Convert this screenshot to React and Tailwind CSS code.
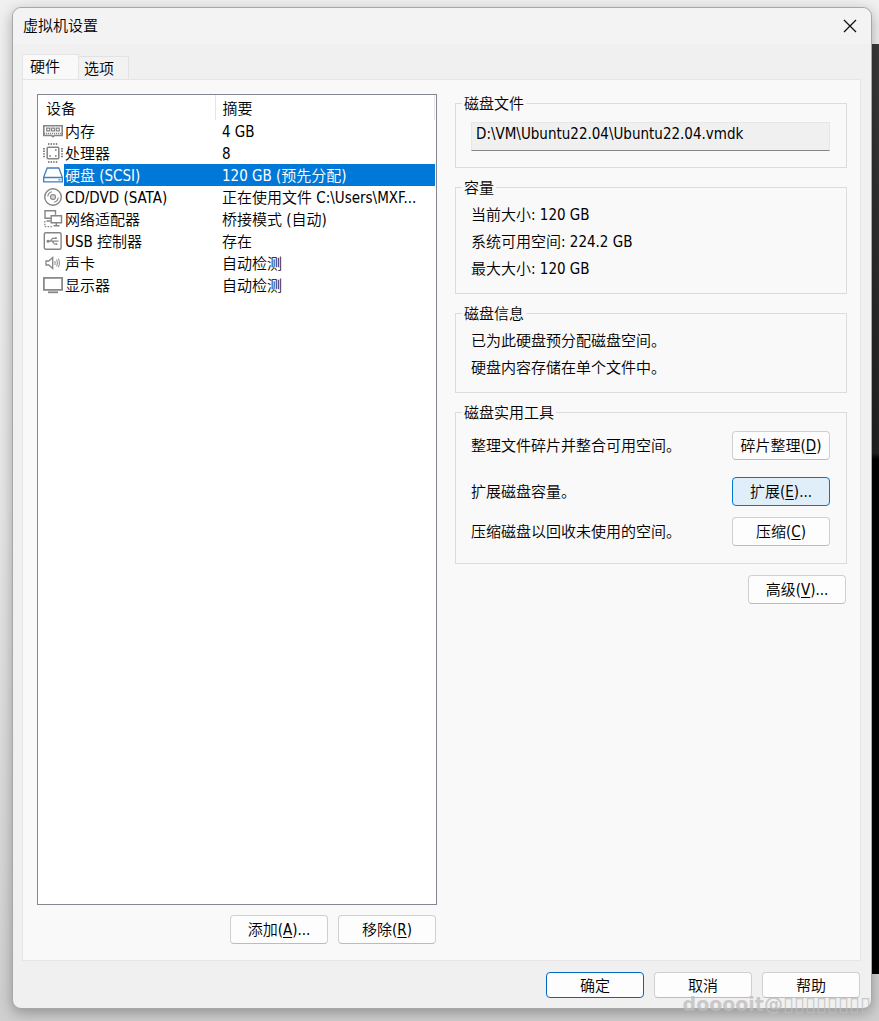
import React from "react";

const icon = { width: 20, height: 20, viewBox: "0 0 20 20", fill: "none", stroke: "#858585", "aria-hidden": true };

const MemoryIcon = () => (
  <svg {...icon}>
    <path d="M.8 4.8h18.4v9.7H11.5l-1.5 1.2-1.5-1.2H.8z" strokeWidth="1.6" />
    <path d="M1 12.5h18" strokeDasharray="1.2 .8" strokeWidth="1.4" />
    <path d="M3.7 7.2h3v2.6h-3zM8.5 7.2h3v2.6h-3zM13.3 7.2h3v2.6h-3z" strokeWidth="1.2" />
  </svg>
);
const CpuIcon = () => (
  <svg {...icon}>
    <rect x="4.2" y="4.2" width="11.6" height="11.6" rx="1" strokeWidth="1.5" />
    <path d="M5 1h10.5M5 19h10.5" strokeDasharray="1.4 1.2" strokeWidth="2" />
    <path d="M1 5v10.5M19 5v10.5" strokeDasharray="1.4 1.2" strokeWidth="2" />
    <circle cx="12.8" cy="7" r=".9" fill="#858585" stroke="none" />
    <circle cx="7" cy="13" r=".9" fill="#858585" stroke="none" />
    <circle cx="12.8" cy="13" r=".9" fill="#858585" stroke="none" />
  </svg>
);
const DiskIcon = () => (
  <svg {...icon} stroke="#3f7fc0">
    <path d="M4.2 3h11.6L19.3 12v4.8H.7V12zM.7 12.5h18.6" fill="#fff" strokeWidth="1.3" />
    <path d="M15.5 14.8h2" strokeWidth="1.2" />
  </svg>
);
const DiscIcon = () => (
  <svg {...icon}>
    <circle cx="10" cy="10" r="8.3" strokeWidth="1.4" />
    <circle cx="10" cy="10" r="2.4" strokeWidth="1.3" />
    <circle cx="10" cy="10" r=".7" fill="#858585" stroke="none" />
    <path d="M4.8 9.5A5.3 5.3 0 0 1 9 4.8M15.2 10.5A5.3 5.3 0 0 1 11 15.2" strokeWidth="1.1" />
  </svg>
);
const NetworkIcon = () => (
  <svg {...icon}>
    <path d="M8 9.3H2V1.8h10.5v4M3.5 12h4" strokeWidth="1.4" />
    <path d="M8.2 6.8h10.3v7H8.2zM13.3 14v2.3M10.5 16.8h6" strokeWidth="1.4" />
    <path d="M1.8 12v5.6h7.5" strokeDasharray="1.5 1.3" strokeWidth="1.3" />
  </svg>
);
const UsbIcon = () => (
  <svg {...icon}>
    <rect x="1.3" y="1.7" width="16.8" height="16.6" rx="1.5" strokeWidth="1.4" />
    <path d="M5 10.2h10.5M7.5 10l2-2.7H12M9.5 10.4l1.8 2.6h1.5" strokeWidth="1.2" />
    <circle cx="5" cy="10.2" r="1.5" fill="#858585" stroke="none" />
    <path d="M12 6.3h1.8v1.8H12zM12.5 12.2h1.8V14h-1.8z" fill="#858585" stroke="none" />
  </svg>
);
const SoundIcon = () => (
  <svg {...icon}>
    <path d="M3 8h2.8l3.9-3.6v11.2L5.8 12H3z" strokeWidth="1.3" />
    <path d="M12 8v4M13.6 6.6c1 2 1 4.8 0 6.8M15.4 5.6c1.3 2.8 1.3 6 0 8.8" strokeWidth="1" />
  </svg>
);
const DisplayIcon = () => (
  <svg {...icon}>
    <rect x=".9" y="2.9" width="18.2" height="12" strokeWidth="1.7" />
    <path d="M5 17.3h10" strokeWidth="1.8" />
  </svg>
);

const devices = [
  { Icon: MemoryIcon, name: "内存", summary: "4 GB" },
  { Icon: CpuIcon, name: "处理器", summary: "8" },
  { Icon: DiskIcon, name: "硬盘 (SCSI)", summary: "120 GB (预先分配)", selected: true },
  { Icon: DiscIcon, name: "CD/DVD (SATA)", summary: "正在使用文件 C:\\Users\\MXF..." },
  { Icon: NetworkIcon, name: "网络适配器", summary: "桥接模式 (自动)" },
  { Icon: UsbIcon, name: "USB 控制器", summary: "存在" },
  { Icon: SoundIcon, name: "声卡", summary: "自动检测" },
  { Icon: DisplayIcon, name: "显示器", summary: "自动检测" },
];

function Button({ label, mnemonic, tail = "", tone = "plain", short = false }) {
  const tones = {
    plain: "border-[#d0d0d0] border-b-[#bcbcbc] bg-[#fdfdfd]",
    primary: "border-[#0067c0] bg-[#fdfdfd]",
    hover: "border-[#0078d4] bg-[#e0eef9]",
  };
  return (
    <button
      type="button"
      className={`flex w-[98px] shrink-0 items-center justify-center rounded-[4px] border pt-px whitespace-nowrap ${short ? "h-[26px]" : "h-[29px]"} ${tones[tone]}`}
    >
      <span>
        {label}
        {mnemonic && (
          <>
            (<span className="underline underline-offset-2">{mnemonic}</span>)
          </>
        )}
        {tail}
      </span>
    </button>
  );
}

function Group({ title, className, children }) {
  return (
    <fieldset className="min-w-0 border border-[#dcdcdc] px-[6px]">
      <legend className="h-5 px-[2px] leading-[22px]">{title}</legend>
      <div className={`pr-[10px] pl-[9px] ${className}`}>{children}</div>
    </fieldset>
  );
}

export default function App() {
  return (
    <div className="relative isolate flex min-h-screen flex-col overflow-hidden bg-linear-to-b from-[#f0f0f0] via-[#e6e6e6] to-[#cfcfcf] pt-[7px] pr-[7px] pb-[12px] pl-[12px] font-['DejaVu_Sans_Condensed','Noto_Sans_CJK_SC',sans-serif] text-[15px] leading-[22px] font-[350] text-black">
      <div className="absolute top-[44px] right-0 bottom-[47px] -z-10 w-10 bg-linear-to-b from-[#3a3a3a] from-0% via-[#222222] via-44% to-black to-45%" />

      <section className="flex flex-1 flex-col rounded-[9px] border border-[#a8a8a8] bg-[#f0f0f0] pb-[10px] shadow-[0_4px_14px_rgba(0,0,0,0.3)]">
        <header className="flex h-9 items-center justify-between rounded-t-[9px] bg-[#f3f3f3] pr-[13px] pl-[10px]">
          <h1>虚拟机设置</h1>
          <button type="button" aria-label="关闭" className="flex size-4 items-center justify-center">
            <svg width="14" height="14" viewBox="0 0 14 14" stroke="#111" strokeWidth="1.3" aria-hidden="true">
              <path d="M1 1l12 12M13 1L1 13" />
            </svg>
          </button>
        </header>

        <div role="tablist" className="mt-[11px] ml-[9px] flex h-6 items-end">
          <button type="button" role="tab" aria-selected="true" className="-mb-px flex h-[26px] w-[57px] justify-start border border-b-0 border-[#e5e5e5] bg-[#f9f9f9] pt-px pl-[7px]">
            硬件
          </button>
          <button type="button" role="tab" aria-selected="false" className="flex h-[23px] w-[50px] justify-start border border-b-0 border-l-0 border-[#e2e2e2] bg-[#f2f2f2] pt-px pl-[5px]">
            选项
          </button>
        </div>

        <main className="mr-[10px] ml-[9px] flex flex-1 gap-[18px] border border-[#e5e5e5] bg-[#f9f9f9] pt-[14px] pr-[13px] pb-4 pl-[14px]">
          <div className="flex min-w-0 flex-[400] flex-col gap-[10px]">
            <div className="flex-1 border border-[#828790] bg-white pr-px pl-[5px]">
              <table className="w-full table-fixed border-collapse text-left">
                <colgroup>
                  <col className="w-[172px]" />
                  <col />
                </colgroup>
                <thead>
                  <tr className="h-[25px]">
                    <th className="border-r border-[#e5e5e5] p-0 pt-[2px] pl-[3px] font-[350]">设备</th>
                    <th className="border-r border-[#e5e5e5] p-0 pt-[2px] pl-[7px] font-[350]">摘要</th>
                  </tr>
                </thead>
                <tbody className="leading-5">
                  {devices.map(({ Icon, name, summary, selected }) => (
                    <tr key={name} className="h-[22px]">
                      <td className="p-0">
                        <div className="flex h-[22px] items-center whitespace-nowrap">
                          <span className="flex w-[21px] shrink-0">
                            <Icon />
                          </span>
                          <span className={`h-[22px] flex-1 pt-[2px] pl-px ${selected ? "bg-[#0078d7] text-white" : ""}`}>{name}</span>
                        </div>
                      </td>
                      <td className={`overflow-hidden p-0 pt-[2px] pl-[7px] whitespace-nowrap ${selected ? "bg-[#0078d7] text-white" : ""}`}>
                        {summary}
                      </td>
                    </tr>
                  ))}
                </tbody>
              </table>
            </div>
            <div className="flex justify-end gap-[10px] pr-px">
              <Button label="添加" mnemonic="A" tail="..." />
              <Button label="移除" mnemonic="R" />
            </div>
          </div>

          <div className="-mt-px flex min-w-0 flex-[392] flex-col gap-[9px]">
            <Group title="磁盘文件" className="pt-[9px] pb-4">
              <input
                aria-label="磁盘文件"
                readOnly
                value="D:\VM\Ubuntu22.04\Ubuntu22.04.vmdk"
                className="block h-[29px] w-full border border-[#e6e6e6] border-b-[#868686] bg-[#f0f0f0] px-1 pb-[6px] outline-none"
              />
            </Group>
            <Group title="容量" className="pt-[5px] pb-[10px] leading-[27px]">
              <p>当前大小: 120 GB</p>
              <p>系统可用空间: 224.2 GB</p>
              <p>最大大小: 120 GB</p>
            </Group>
            <Group title="磁盘信息" className="pt-[5px] pb-[10px] leading-[27px]">
              <p>已为此硬盘预分配磁盘空间。</p>
              <p>硬盘内容存储在单个文件中。</p>
            </Group>
            <Group title="磁盘实用工具" className="pt-[9px] pb-[17px]">
              <div className="flex items-center justify-between">
                <p>整理文件碎片并整合可用空间。</p>
                <Button label="碎片整理" mnemonic="D" />
              </div>
              <div className="mt-[17px] flex items-center justify-between">
                <p>扩展磁盘容量。</p>
                <Button label="扩展" mnemonic="E" tail="..." tone="hover" />
              </div>
              <div className="mt-[11px] flex items-center justify-between">
                <p>压缩磁盘以回收未使用的空间。</p>
                <Button label="压缩" mnemonic="C" />
              </div>
            </Group>
            <div className="mt-[2px] flex justify-end pr-px">
              <Button label="高级" mnemonic="V" tail="..." />
            </div>
          </div>
        </main>

        <footer className="mt-[11px] mr-[11px] flex justify-end gap-[10px]">
          <Button label="确定" tone="primary" short />
          <Button label="取消" short />
          <Button label="帮助" short />
        </footer>
      </section>

      <div className="pointer-events-none absolute right-[8px] bottom-[6px] flex items-center font-['DejaVu_Sans',sans-serif] whitespace-nowrap text-[#bdbdbd]/80">
        <span className="text-[19px] font-bold">dooooit@</span>
        <span className="text-[20px] font-normal">▯▯▯▯▯▯▯▯</span>
      </div>
    </div>
  );
}
